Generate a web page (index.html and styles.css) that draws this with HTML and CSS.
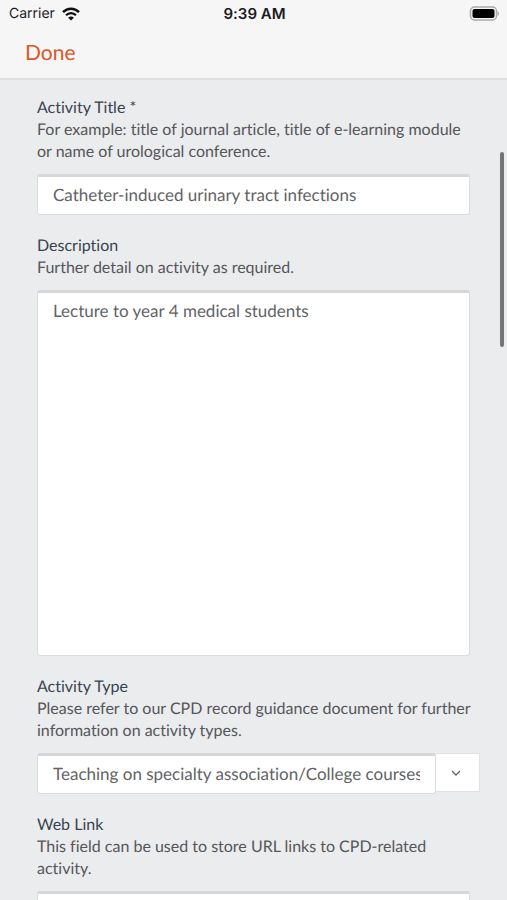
FILE: index.html
```html
<!DOCTYPE html>
<html lang="en">
<head>
<meta charset="utf-8">
<meta name="viewport" content="width=device-width, initial-scale=1">
<title>Activity</title>
<link rel="stylesheet" href="styles.css">
</head>
<body>
<div class="app">
  <header class="header">
    <div class="status">
      <div class="carrier">
        <span>Carrier</span>
        <svg class="wifi" viewBox="0 0 18 14" aria-hidden="true">
          <path d="M1 5.2C5.500 .6 12.500 .6 17 5.200" fill="none" stroke="#111" stroke-width="2.500"/>
          <path d="M4 8.300C6.900 5.400 11.100 5.400 14 8.300" fill="none" stroke="#111" stroke-width="2.300"/>
          <path d="M9 13.600L6.100 10.700C7.700 9.200 10.300 9.200 11.900 10.700Z" fill="#111"/>
        </svg>
      </div>
      <time class="clock">9:39 AM</time>
      <svg class="battery" viewBox="0 0 31 15" aria-hidden="true">
        <rect x="1.500" y="1" width="26" height="13" rx="4" fill="#f7f6f7" stroke="#aaa" stroke-width="1.500"/>
        <rect x="3.500" y="3" width="22" height="9" rx="2" fill="#000"/>
        <path d="M28.500 5.200C30.500 6 30.500 9 28.500 9.800Z" fill="#aaa"/>
      </svg>
    </div>
    <nav class="nav"><button class="done" type="button">Done</button></nav>
  </header>
  <main class="scroll">
    <form class="form">
      <div class="field">
        <label class="label" for="title">Activity Title *</label>
        <p class="help">For example: title of journal article, title of e-learning module or name of urological conference.</p>
        <input class="control" id="title" type="text" value="Catheter-induced urinary tract infections">
      </div>
      <div class="field">
        <label class="label" for="description">Description</label>
        <p class="help">Further detail on activity as required.</p>
        <textarea class="control area" id="description" rows="16">Lecture to year 4 medical students</textarea>
      </div>
      <div class="field">
        <label class="label" for="type">Activity Type</label>
        <p class="help">Please refer to our CPD record guidance document for further information on activity types.</p>
        <div class="combo">
          <input class="control" id="type" type="text" value="Teaching on specialty association/College courses">
          <button class="toggle" type="button" aria-label="Show activity types">
            <svg class="chevron" viewBox="0 0 10 6" aria-hidden="true"><path d="M1 1L5 5L9 1" fill="none" stroke="#666" stroke-width="1.300"/></svg>
          </button>
        </div>
      </div>
      <div class="field">
        <label class="label" for="link">Web Link</label>
        <p class="help">This field can be used to store URL links to CPD-related activity.</p>
        <input class="control" id="link" type="url">
      </div>
    </form>
  </main>
  <div class="thumb"></div>
</div>
</body>
</html>
```
FILE: styles.css
```css
* {
  box-sizing: border-box;
}

body {
  margin: 0;
  background: #ebecee;
  color: #55565a;
  font-family: Lato, sans-serif;
  font-size: 16px;
  font-variant-ligatures: none;
  line-height: 22px;
  text-rendering: geometricPrecision;
}

button,
input,
textarea {
  font-family: inherit;
  font-variant-ligatures: inherit;
  text-rendering: inherit;
}

.app {
  position: relative;
  display: flex;
  flex-direction: column;
  height: 100vh;
  overflow: hidden;
}

.header {
  flex: none;
  background: #f7f6f7;
  border-bottom: 2px solid #dfdfe1;
}

.status {
  display: grid;
  grid-template-columns: 1fr auto 1fr;
  align-items: center;
  height: 27px;
  padding: 0 7px 0 9px;
  color: #1c1c1e;
  font-family: Inter, sans-serif;
  font-size: 14px;
}

.carrier {
  display: flex;
  align-items: center;
  gap: 7px;
}

.wifi {
  width: 18px;
  height: 14px;
}

.clock {
  font-size: 15px;
  font-weight: 600;
}

.battery {
  justify-self: end;
  width: 31px;
  height: 15px;
}

.nav {
  display: flex;
  align-items: center;
  height: 51px;
  padding: 0 25px;
}

.done {
  padding: 0;
  border: 0;
  background: none;
  color: #dc5726;
  font-size: 21px;
  line-height: 28px;
}

.scroll {
  flex: 1;
  min-height: 0;
  overflow: hidden;
}

.form {
  display: flex;
  flex-direction: column;
  gap: 20px;
  padding: 17px 37px;
}

.label {
  display: block;
  color: #37444f;
}

.help {
  margin: 0 -8px 11px 0;
}

.control {
  display: block;
  width: 100%;
  height: 41px;
  padding: 0 15px 2px;
  border: 1px solid #d9dddf;
  border-top: 3px solid #d5d7d9;
  border-radius: 3px;
  background: #fff;
  color: #626366;
  font-size: 17px;
  outline: 0;
}

.area {
  height: 366px;
  padding: 6px 15px;
  line-height: 24px;
  resize: none;
}

.combo {
  display: flex;
  align-items: flex-start;
  margin-right: -10px;
}

.combo .control {
  flex: 1;
  min-width: 0;
}

.toggle {
  display: flex;
  align-items: center;
  justify-content: center;
  width: 44px;
  height: 39px;
  padding: 0 4px 0 0;
  border: 1px solid #e0e1e3;
  border-left: 0;
  background: #fff;
}

.chevron {
  width: 10px;
  height: 6px;
}

.thumb {
  position: absolute;
  top: 152px;
  right: 3px;
  width: 4px;
  height: 195px;
  border-radius: 2px;
  background: #747577;
}
```
